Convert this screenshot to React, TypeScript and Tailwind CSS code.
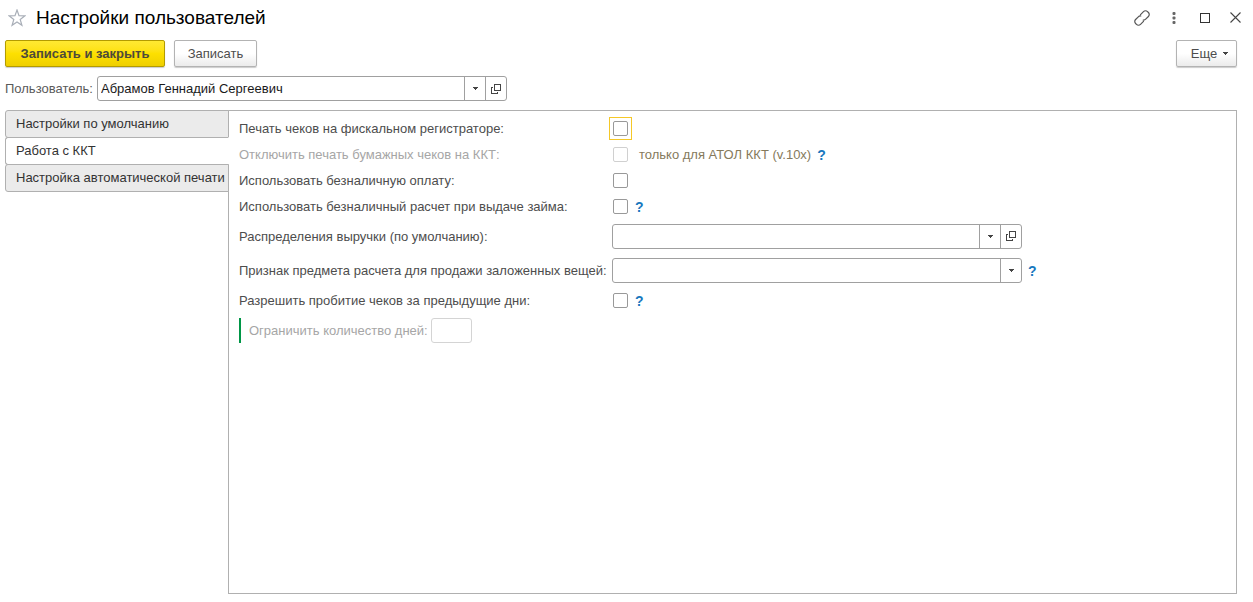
import type { ReactNode } from "react";

function Caret() {
  return (
    <svg width="5" height="3" viewBox="0 0 5 3" shapeRendering="crispEdges" aria-hidden="true">
      <path d="M0 0h5v1H0zM1 1h3v1H1zM2 2h1v1H2z" fill="#444" />
    </svg>
  );
}

function OpenIcon() {
  return (
    <svg width="10" height="10" viewBox="0 0 10 10" fill="none" stroke="#444" shapeRendering="crispEdges" aria-hidden="true">
      <path d="M3.5 0.5h6v6h-6zM2 3.5H0.5v6h6V8" />
    </svg>
  );
}

const cell = "flex w-[21px] shrink-0 items-center justify-center border-l border-[#a0a0a0]";

function ReferenceField({ id, value, className }: { id: string; value: string; className: string }) {
  return (
    <div className={`flex h-[25px] overflow-hidden rounded-[3px] border border-[#a0a0a0] bg-white ${className}`}>
      <input id={id} defaultValue={value} className="min-w-0 flex-1 px-[3px] text-[#1a1a1a] outline-none" />
      <button type="button" aria-label="Выбрать из списка" className={cell}>
        <Caret />
      </button>
      <button type="button" aria-label="Открыть" className={cell}>
        <OpenIcon />
      </button>
    </div>
  );
}

function Check({ id, disabled, focused }: { id: string; disabled?: boolean; focused?: boolean }) {
  return (
    <span className={`-mx-[3px] flex border p-[3px] ${focused ? "border-[#f5c828]" : "border-transparent"}`}>
      <input
        id={id}
        type="checkbox"
        disabled={disabled}
        className={`size-[15px] shrink-0 appearance-none rounded-[2px] border bg-white outline-none checked:bg-[#f7d000] ${
          disabled ? "border-[#d0d0d0]" : "border-[#999]"
        }`}
      />
    </span>
  );
}

function Help() {
  return (
    <button type="button" aria-label="Справка" className="pt-px text-sm leading-4 font-bold text-[#1878be]">
      ?
    </button>
  );
}

function Row({ id, label, tall, disabled, children }: { id: string; label: string; tall?: boolean; disabled?: boolean; children: ReactNode }) {
  return (
    <div className={`grid grid-cols-[373px_minmax(0,1fr)] items-center ${tall ? "h-[34px]" : "h-[26px]"}`}>
      <label htmlFor={id} className={`pt-px whitespace-nowrap ${disabled ? "text-[#a6a6a6]" : "text-[#4d4d4d]"}`}>
        {label}
      </label>
      <div className="flex items-center gap-[6px]">{children}</div>
    </div>
  );
}

const tabs = ["Настройки по умолчанию", "Работа с ККТ", "Настройка автоматической печати"];

export default function App() {
  return (
    <main className="flex min-h-screen flex-col bg-white pr-4 pb-2 pl-[5px] font-['Liberation_Sans',Arial,sans-serif] text-[13px] leading-4 text-[#4d4d4d]">
      <header className="-mr-3 flex h-[35px] items-center">
        <button type="button" aria-label="Добавить в избранное" className="ml-[3px]">
          <svg width="18" height="18" viewBox="0 0 18 18" fill="none" stroke="#a9afb8" strokeWidth="1.2" aria-hidden="true">
            <path d="M9 1l2 5.700 6 .1-4.800 3.700 1.700 5.800L9 12.900l-4.900 3.400 1.700-5.800L1 6.800l6-.1z" />
          </svg>
        </button>
        <h1 className="ml-[10px] flex-1 text-[19px] text-black">Настройки пользователей</h1>
        <div className="flex items-center">
          <button type="button" aria-label="Получить ссылку" className="mr-[22px]">
            <svg width="16" height="16" viewBox="0 0 16 16" fill="none" stroke="#555" strokeWidth="1.2" strokeLinecap="round" aria-hidden="true">
              <path d="M6.500 4.600L9.500 1.600a2.800 2.800 0 0 1 4 0l.9.9a2.800 2.800 0 0 1 0 4L11.700 9.200a2.800 2.800 0 0 1-2.500.8M9.500 11.400L6.500 14.400a2.800 2.800 0 0 1-4 0l-.9-.9a2.800 2.800 0 0 1 0-4L4.300 6.800a2.800 2.800 0 0 1 2.500-.8" />
            </svg>
          </button>
          <button type="button" aria-label="Меню" className="mr-6">
            <svg width="4" height="12" viewBox="0 0 4 12" fill="#666" aria-hidden="true">
              <rect x="0.500" width="3" height="3" rx="1" />
              <rect x="0.500" y="4.500" width="3" height="3" rx="1" />
              <rect x="0.500" y="9" width="3" height="3" rx="1" />
            </svg>
          </button>
          <button type="button" aria-label="Развернуть" className="mr-5 size-[10px] border border-[#333]" />
          <button type="button" aria-label="Закрыть" className="mr-2">
            <svg width="11" height="11" viewBox="0 0 11 11" fill="none" stroke="#444" strokeWidth="1.1" aria-hidden="true">
              <path d="M.5.5l10 10M10.500.5l-10 10" />
            </svg>
          </button>
        </div>
      </header>

      <div className="mt-[5px] flex h-[27px] gap-[9px]">
        <button
          type="button"
          className="w-40 rounded-[2px] border border-[#b39b00] bg-linear-to-b from-[#ffe932] via-[#fde000] to-[#efcf00] font-bold text-[#4d4a3a] shadow-[0_1px_1px_#ccc]"
        >
          Записать и закрыть
        </button>
        <button
          type="button"
          className="w-[83px] rounded-[2px] border border-[#b3b3b3] bg-linear-to-b from-white via-white to-[#ebebeb] shadow-[0_1px_1px_#ccc]"
        >
          Записать
        </button>
        <button
          type="button"
          className="ml-auto flex w-[61px] items-center justify-center gap-[6px] rounded-[2px] border border-[#b3b3b3] bg-linear-to-b from-white via-white to-[#ebebeb] pl-[6px] shadow-[0_1px_1px_#ccc]"
        >
          Еще
          <Caret />
        </button>
      </div>

      <div className="mt-[9px] flex items-center">
        <label htmlFor="user" className="w-[92px] text-[#5a5a5a]">
          Пользователь:
        </label>
        <ReferenceField id="user" value="Абрамов Геннадий Сергеевич" className="w-[410px]" />
      </div>

      <div className="mt-[9px] flex flex-1">
        <div role="tablist" aria-orientation="vertical" className="z-10 -mr-px flex w-[224px] shrink-0 flex-col">
          {tabs.map((tab, i) => (
            <button
              key={tab}
              type="button"
              role="tab"
              aria-selected={i === 1}
              className={`-mb-px h-7 rounded-l-[3px] border border-[#b0b0b0] pl-[10px] text-left whitespace-nowrap text-[#333] ${
                i === 1 ? "border-r-white bg-white" : "bg-[#ebebeb]"
              }`}
            >
              {tab}
            </button>
          ))}
        </div>

        <section role="tabpanel" aria-label="Работа с ККТ" className="min-w-0 flex-1 border border-[#b0b0b0] pt-1 pl-[10px]">
          <Row id="print" label="Печать чеков на фискальном регистраторе:">
            <Check id="print" focused />
          </Row>
          <Row id="paper" label="Отключить печать бумажных чеков на ККТ:" disabled>
            <Check id="paper" disabled />
            <span className="ml-1 pt-px text-[#857a5c]">только для АТОЛ ККТ (v.10x)</span>
            <Help />
          </Row>
          <Row id="cashless" label="Использовать безналичную оплату:">
            <Check id="cashless" />
          </Row>
          <Row id="loan" label="Использовать безналичный расчет при выдаче займа:">
            <Check id="loan" />
            <Help />
          </Row>
          <Row id="revenue" label="Распределения выручки (по умолчанию):" tall>
            <ReferenceField id="revenue" value="" className="w-[410px]" />
          </Row>
          <Row id="subject" label="Признак предмета расчета для продажи заложенных вещей:" tall>
            <div className="grid h-[25px] w-[410px] overflow-hidden rounded-[3px] border border-[#a0a0a0] bg-white">
              <select id="subject" className="col-start-1 row-start-1 appearance-none px-[3px] outline-none">
                <option />
              </select>
              <span className={`pointer-events-none col-start-1 row-start-1 justify-self-end ${cell}`}>
                <Caret />
              </span>
            </div>
            <Help />
          </Row>
          <Row id="past" label="Разрешить пробитие чеков за предыдущие дни:">
            <Check id="past" />
            <Help />
          </Row>
          <div className="mt-[5px] flex h-[25px] items-center border-l-2 border-[#009646] pl-2">
            <label htmlFor="days" className="w-[182px] text-[#a6a6a6]">
              Ограничить количество дней:
            </label>
            <input id="days" disabled className="h-[25px] w-[41px] rounded-[3px] border border-[#d4d4d4] bg-white px-[3px]" />
          </div>
        </section>
      </div>
    </main>
  );
}
